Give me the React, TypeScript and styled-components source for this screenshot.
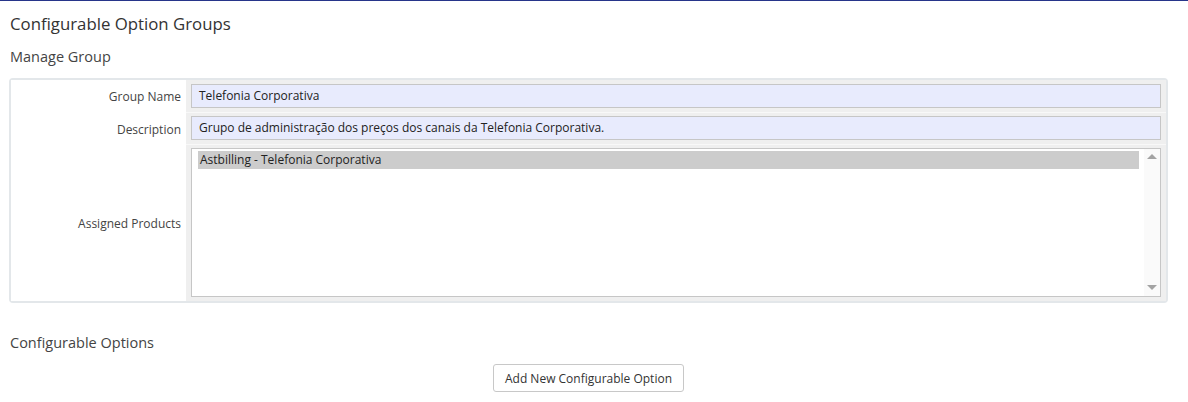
import React from "react";
import styled, { createGlobalStyle } from "styled-components";

const Global = createGlobalStyle`
  html, body { margin: 0; padding: 0; background: #fff; }
  body { font-family: "Open Sans", "Noto Sans", Arial, sans-serif; color: #333; }
`;

const Shell = styled.div`
  display: flex;
  width: 1188px;
  height: 402px;
  overflow: hidden;
`;

const Main = styled.div`
  flex: 1;
  border-top: 1px solid #27358a;
  padding: 0 20px 0 9px;
  display: flex;
  flex-direction: column;
`;

const ScrollTrack = styled.div`
  width: 6px;
  background: #2b2b2b;
  display: flex;
  justify-content: flex-end;
`;

const ScrollThumb = styled.div`
  width: 3px;
  height: 304px;
  background: #8a8a8a;
  border-radius: 0 0 2px 2px;
`;

const Title = styled.h1`
  margin: 12px 0 0 1px;
  font-size: 16.8px;
  font-weight: 400;
  line-height: 22px;
  color: #333;
`;

const SubTitle = styled.h2`
  margin: 12px 0 0 1px;
  font-size: 14.5px;
  font-weight: 400;
  line-height: 20px;
  color: #444;
`;

const FormTable = styled.table`
  margin-top: 11px;
  width: 1159px;
  border: 2px solid #e3e7ea;
  border-radius: 4px;
  border-collapse: separate;
  border-spacing: 0;
`;

const LabelCell = styled.td`
  width: 170px;
  padding: 0 5px 0 0;
  text-align: right;
  font-size: 12px;
  color: #444;
  background: #fff;
  vertical-align: middle;
`;

const FieldCell = styled.td<{ $last?: boolean; $first?: boolean }>`
  background: #efefef;
  padding: ${(p) => (p.$first ? "4px" : "3px")} 5px 4px;
  border-bottom: ${(p) => (p.$last ? "0" : "1px solid #f8f8f8")};
`;

const TextInput = styled.div`
  box-sizing: border-box;
  height: 24px;
  border: 1px solid #c6c6c6;
  background: #e8ebfd;
  padding: 0 7px;
  font-size: 12px;
  line-height: 22px;
  color: #222;
`;

const ListBox = styled.div`
  display: flex;
  height: 149px;
  box-sizing: border-box;
  border: 1px solid #c6c6c6;
  background: #fff;
`;

const Options = styled.div`
  flex: 1;
  padding: 2px 5px 0 6px;
`;

const Option = styled.div<{ $selected?: boolean }>`
  height: 18px;
  line-height: 18px;
  font-size: 12px;
  padding-left: 2px;
  color: #222;
  background: ${(p) => (p.$selected ? "#cccccc" : "transparent")};
`;

const ScrollBar = styled.div`
  width: 16px;
  background: #fafafa;
  display: flex;
  flex-direction: column;
  justify-content: space-between;
  align-items: center;
  padding: 5px 0 6px;
`;

const Arrow = styled.div<{ $down?: boolean }>`
  width: 0;
  height: 0;
  border-left: 5px solid transparent;
  border-right: 5px solid transparent;
  ${(p) =>
    p.$down
      ? "border-top: 5px solid #a3a3a3;"
      : "border-bottom: 5px solid #a3a3a3;"}
`;

const SectionTitle = styled.h2`
  margin: 30px 0 0 1px;
  font-size: 14.5px;
  font-weight: 400;
  line-height: 20px;
  color: #444;
`;

const ButtonRow = styled.div`
  width: 1159px;
  display: flex;
  justify-content: center;
  margin-top: 11px;
`;

const Button = styled.button`
  height: 28px;
  padding: 0 11px;
  border: 1px solid #c8c8c8;
  border-radius: 3px;
  background: #fff;
  font-family: "Open Sans", "Noto Sans", Arial, sans-serif;
  font-size: 12px;
  color: #333;
`;

export default function App() {
  return (
    <>
      <Global />
      <Shell>
        <Main>
          <Title>Configurable Option Groups</Title>
          <SubTitle>Manage Group</SubTitle>
          <FormTable>
            <tbody>
              <tr>
                <LabelCell>Group Name</LabelCell>
                <FieldCell $first>
                  <TextInput>Telefonia Corporativa</TextInput>
                </FieldCell>
              </tr>
              <tr>
                <LabelCell>Description</LabelCell>
                <FieldCell>
                  <TextInput>
                    Grupo de administração dos preços dos canais da Telefonia Corporativa.
                  </TextInput>
                </FieldCell>
              </tr>
              <tr>
                <LabelCell>Assigned Products</LabelCell>
                <FieldCell $last>
                  <ListBox>
                    <Options>
                      <Option $selected>Astbilling - Telefonia Corporativa</Option>
                    </Options>
                    <ScrollBar>
                      <Arrow />
                      <Arrow $down />
                    </ScrollBar>
                  </ListBox>
                </FieldCell>
              </tr>
            </tbody>
          </FormTable>
          <SectionTitle>Configurable Options</SectionTitle>
          <ButtonRow>
            <Button>Add New Configurable Option</Button>
          </ButtonRow>
        </Main>
        <ScrollTrack>
          <ScrollThumb />
        </ScrollTrack>
      </Shell>
    </>
  );
}
